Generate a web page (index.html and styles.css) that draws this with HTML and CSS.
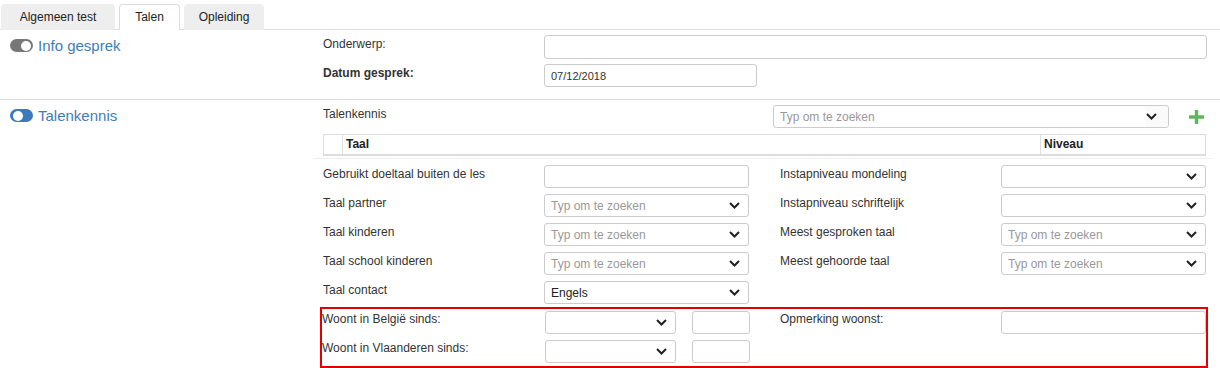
FILE: index.html
```html
<!DOCTYPE html>
<html lang="nl">
<head>
<meta charset="utf-8">
<title>Talen</title>
<link rel="stylesheet" href="styles.css">
</head>
<body>
<div class="tabs">
  <div class="tab tab-a">Algemeen test</div>
  <div class="tab tab-b active">Talen</div>
  <div class="tab tab-c">Opleiding</div>
</div>

<section class="section s1">
  <div class="side"><span class="toggle off"><span class="knob"></span></span><span class="title">Info gesprek</span></div>
  <div class="main">
    <div class="pair">
      <div class="label">Onderwerp:</div>
      <div class="field tall"></div>
    </div>
    <div class="pair">
      <div class="label bold">Datum gesprek:</div>
      <div class="field date">07/12/2018</div>
    </div>
  </div>
</section>

<section class="section s2">
  <div class="side"><span class="toggle on"><span class="knob"></span></span><span class="title">Talenkennis</span></div>
  <div class="main">
    <div class="topline">
      <div class="label grow">Talenkennis</div>
      <div class="field select big"><span class="ph">Typ om te zoeken</span><span class="chev-cell"><svg width="11" height="7" viewBox="0 0 11 7"><path d="M1 1l4.5 4.5L10 1" stroke="#222" stroke-width="2" fill="none"/></svg></span></div>
      <div class="plus-cell"><svg width="15" height="14" viewBox="0 0 15 14"><path d="M7.5 0v14M0 7h15" stroke="#5cb85c" stroke-width="3.4"/></svg></div>
    </div>
    <div class="table">
      <div class="th th-c"></div>
      <div class="th th-taal">Taal</div>
      <div class="th th-niv">Niveau</div>
    </div>
    <div class="rule"></div>
    <div class="grid">
      <div class="label">Gebruikt doeltaal buiten de les</div>
      <div class="field"></div>
      <div></div>
      <div class="label">Instapniveau mondeling</div>
      <div class="field select"><span class="ph"></span><svg width="11" height="7" viewBox="0 0 11 7"><path d="M1 1l4.5 4.5L10 1" stroke="#222" stroke-width="2" fill="none"/></svg></div>

      <div class="label">Taal partner</div>
      <div class="field select"><span class="ph">Typ om te zoeken</span><svg width="11" height="7" viewBox="0 0 11 7"><path d="M1 1l4.5 4.5L10 1" stroke="#222" stroke-width="2" fill="none"/></svg></div>
      <div></div>
      <div class="label">Instapniveau schriftelijk</div>
      <div class="field select"><span class="ph"></span><svg width="11" height="7" viewBox="0 0 11 7"><path d="M1 1l4.5 4.5L10 1" stroke="#222" stroke-width="2" fill="none"/></svg></div>

      <div class="label">Taal kinderen</div>
      <div class="field select"><span class="ph">Typ om te zoeken</span><svg width="11" height="7" viewBox="0 0 11 7"><path d="M1 1l4.5 4.5L10 1" stroke="#222" stroke-width="2" fill="none"/></svg></div>
      <div></div>
      <div class="label">Meest gesproken taal</div>
      <div class="field select"><span class="ph">Typ om te zoeken</span><svg width="11" height="7" viewBox="0 0 11 7"><path d="M1 1l4.5 4.5L10 1" stroke="#222" stroke-width="2" fill="none"/></svg></div>

      <div class="label">Taal school kinderen</div>
      <div class="field select"><span class="ph">Typ om te zoeken</span><svg width="11" height="7" viewBox="0 0 11 7"><path d="M1 1l4.5 4.5L10 1" stroke="#222" stroke-width="2" fill="none"/></svg></div>
      <div></div>
      <div class="label">Meest gehoorde taal</div>
      <div class="field select"><span class="ph">Typ om te zoeken</span><svg width="11" height="7" viewBox="0 0 11 7"><path d="M1 1l4.5 4.5L10 1" stroke="#222" stroke-width="2" fill="none"/></svg></div>

      <div class="label">Taal contact</div>
      <div class="field select"><span class="val">Engels</span><svg width="11" height="7" viewBox="0 0 11 7"><path d="M1 1l4.5 4.5L10 1" stroke="#222" stroke-width="2" fill="none"/></svg></div>
    </div>

    <div class="redbox">
      <div class="label">Woont in België sinds:</div>
      <div class="field select"><span class="ph"></span><svg width="11" height="7" viewBox="0 0 11 7"><path d="M1 1l4.5 4.5L10 1" stroke="#222" stroke-width="2" fill="none"/></svg></div>
      <div></div>
      <div class="field"></div>
      <div></div>
      <div class="label">Opmerking woonst:</div>
      <div class="field"></div>

      <div class="label">Woont in Vlaanderen sinds:</div>
      <div class="field select"><span class="ph"></span><svg width="11" height="7" viewBox="0 0 11 7"><path d="M1 1l4.5 4.5L10 1" stroke="#222" stroke-width="2" fill="none"/></svg></div>
      <div></div>
      <div class="field"></div>
    </div>
  </div>
</section>
</body>
</html>
```

FILE: styles.css
```css
* { box-sizing: border-box; }
html, body { margin: 0; padding: 0; background: #fff; }
body {
  width: 1220px;
  font-family: "Liberation Sans", Arial, sans-serif;
  font-size: 12px;
  color: #333;
}

.tabs {
  display: flex;
  gap: 4px;
  padding: 4px 0 0 1px;
  border-bottom: 1px solid #ddd;
  height: 30px;
}
.tab {
  height: 26px;
  line-height: 24px;
  text-align: center;
  background: #eeeeee;
  border: 1px solid #eeeeee;
  border-bottom: none;
  border-radius: 4px 4px 0 0;
  color: #222;
}
.tab-a { width: 114px; }
.tab-b { width: 61px; }
.tab-c { width: 80px; }
.tab.active {
  background: #fff;
  border-color: #ddd;
}

.section { display: flex; }
.s1 { border-bottom: 1px solid #ddd; height: 70px; }

.side {
  width: 314px;
  display: flex;
  align-items: center;
  align-self: flex-start;
  padding-left: 10px;
  height: 31px;
}
.s2 .side { height: 31px; }

.toggle {
  width: 23px;
  height: 13px;
  border-radius: 7px;
  display: flex;
  align-items: center;
  padding: 0 2px;
  margin-right: 5px;
}
.toggle .knob {
  width: 10px;
  height: 10px;
  border-radius: 50%;
  background: #fff;
}
.toggle.off { background: #777; justify-content: flex-end; }
.toggle.on { background: #3b7bbd; justify-content: flex-start; padding-left: 3px; }

.title {
  font-size: 15px;
  color: #3e7dba;
  line-height: 18px;
}

.main {
  width: 898px;
  padding: 5px 6px 0 9px;
}

.label { line-height: 16px; padding-top: 1px; white-space: nowrap; }
.bold { font-weight: bold; }

.pair {
  display: grid;
  grid-template-columns: 221px 1fr;
  margin-bottom: 5px;
}
.pair:last-child { margin-bottom: 0; }

.field {
  height: 23px;
  border: 1px solid #ccc;
  border-radius: 3px;
  background: #fff;
  display: flex;
  align-items: center;
  padding: 0 7px 0 6px;
  font-size: 12px;
}
.field.tall { height: 24px; margin-right: -1px; }
.field.date { width: 213px; font-size: 11px; color: #333; }

.select { justify-content: space-between; }
.select svg { flex: none; margin-right: 1px; }
.ph { color: #999; }
.val { color: #222; }

.topline {
  display: flex;
  align-items: flex-start;
}
.grow { flex: 1; }
.field.big { width: 396px; padding-right: 0; }
.chev-cell {
  width: 22px;
  height: 21px;
  display: flex;
  align-items: center;
  justify-content: flex-start;
  background: #fafafa;
  border-radius: 0 3px 3px 0;
}
.plus-cell {
  width: 37px;
  height: 23px;
  display: flex;
  align-items: center;
  justify-content: flex-end;
  padding-right: 2px;
}

.table {
  display: flex;
  margin-top: 6px;
  height: 22px;
  border: 1px solid #ddd;
  border-bottom: 2px solid #ddd;
  font-weight: bold;
  color: #222;
}
.th { line-height: 19px; padding-left: 3px; }
.th-c { width: 19px; border-right: 1px solid #ddd; }
.th-taal { width: 698px; border-right: 1px solid #ddd; }
.th-niv { flex: 1; }

.rule {
  height: 1px;
  background: #eee;
  margin: 2px -6px 0 -9px;
}

.grid {
  display: grid;
  grid-template-columns: 221px 205px 31px 221px 205px;
  grid-auto-rows: 23px;
  row-gap: 6px;
  margin-top: 6px;
}

.redbox {
  display: grid;
  grid-template-columns: 223px 131px 16px 58px 30px 221px 205px;
  grid-auto-rows: 23px;
  row-gap: 6px;
  margin: 3px -2px 0 -3px;
  border: 2px solid #e00000;
  padding: 2px 0 2px 0;
  height: 61px;
}
.redbox .label { padding-top: 0; }
```
